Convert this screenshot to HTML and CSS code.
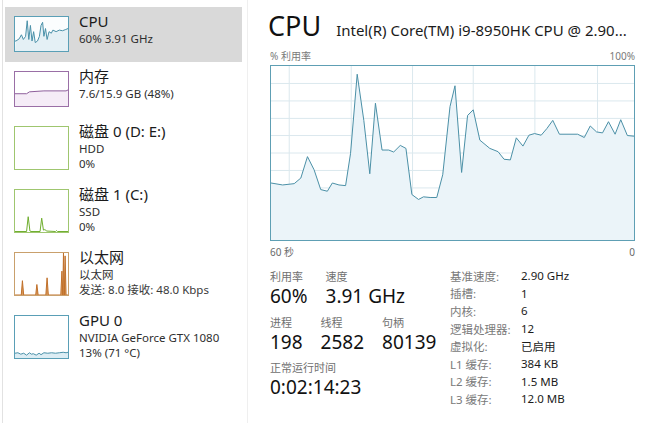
FILE: index.html
```html
<!DOCTYPE html>
<html lang="zh-CN">
<head>
<meta charset="utf-8">
<title>任务管理器 - CPU</title>
<link rel="stylesheet" href="styles.css">
</head>
<body>
<div class="app">
  <aside class="sidebar">
    <div class="item short selected">
      <svg class="thumb cpu" viewBox="42 48 165 109" preserveAspectRatio="none">
        <polygon class="area" points="42,157 45,125 55,118 62,105 68,120 75,110 80,60 85,120 90,75 95,125 100,95 105,130 112,125 118,110 123,75 128,65 132,110 137,85 142,120 148,95 155,100 160,90 170,95 180,90 190,92 200,88 207,85 207,157"/>
        <polyline class="line" points="42,125 45,125 55,118 62,105 68,120 75,110 80,60 85,120 90,75 95,125 100,95 105,130 112,125 118,110 123,75 128,65 132,110 137,85 142,120 148,95 155,100 160,90 170,95 180,90 190,92 200,88 207,85"/>
      </svg>
      <div class="info">
        <div class="title">CPU</div>
        <div class="sub">60% 3.91 GHz</div>
      </div>
    </div>
    <div class="item short">
      <svg class="thumb mem" viewBox="0 0 55 36" preserveAspectRatio="none">
        <polygon class="area" points="0,23 12,23 15,21 30,20 53,20 55,19 55,36 0,36"/>
        <polyline class="line" points="0,23 12,23 15,21 30,20 53,20 55,19"/>
      </svg>
      <div class="info">
        <div class="title">内存</div>
        <div class="sub">7.6/15.9 GB (48%)</div>
      </div>
    </div>
    <div class="item tall">
      <div class="thumb disk"></div>
      <div class="info">
        <div class="title">磁盘 0 (D: E:)</div>
        <div class="sub">HDD</div>
        <div class="sub">0%</div>
      </div>
    </div>
    <div class="item tall">
      <svg class="thumb disk" viewBox="0 0 55 44" preserveAspectRatio="none">
        <polyline class="line" points="0,43.5 12,43.5 13.7,28 15.5,43 16.5,43.5 26,43.5 27.7,29.5 29.5,42 31,41.5 33,43 42,43.5 43,42.5 44,43.5 55,43.5"/>
      </svg>
      <div class="info">
        <div class="title">磁盘 1 (C:)</div>
        <div class="sub">SSD</div>
        <div class="sub">0%</div>
      </div>
    </div>
    <div class="item tall">
      <svg class="thumb net" viewBox="0 0 55 44" preserveAspectRatio="none">
        <polygon class="area" points="0,44 6.5,44 7.7,29 9,44 21.5,44 22.7,33 24,44 32,44 33.3,26 34.6,44 47.5,44 48.7,19 49.6,44 50.3,0 51.2,44 52,3 53,44 55,44"/>
        <polyline class="line" points="0,44 6.5,44 7.7,29 9,44 21.5,44 22.7,33 24,44 32,44 33.3,26 34.6,44 47.5,44 48.7,19 49.6,44 50.3,0 51.2,44 52,3 53,44 55,44"/>
      </svg>
      <div class="info">
        <div class="title">以太网</div>
        <div class="sub">以太网</div>
        <div class="sub muted">发送: 8.0 接收: 48.0 Kbps</div>
      </div>
    </div>
    <div class="item tall">
      <svg class="thumb gpu" viewBox="0 0 55 44" preserveAspectRatio="none">
        <polygon class="area" points="0,39 3,38.5 6,40 9,39 12,41 15,38.5 17,40 19,39.5 22,41 25,39 27,40.5 30,38.5 34,39 38,38.5 42,39 46,38.5 50,38 53,38.5 55,38 55,44 0,44"/>
        <polyline class="line" points="0,39 3,38.5 6,40 9,39 12,41 15,38.5 17,40 19,39.5 22,41 25,39 27,40.5 30,38.5 34,39 38,38.5 42,39 46,38.5 50,38 53,38.5 55,38"/>
      </svg>
      <div class="info">
        <div class="title">GPU 0</div>
        <div class="sub">NVIDIA GeForce GTX 1080</div>
        <div class="sub">13% (71 °C)</div>
      </div>
    </div>
  </aside>

  <main class="detail">
    <div class="head">
      <h1 class="head-title">CPU</h1>
      <span class="model">Intel(R) Core(TM) i9-8950HK CPU @ 2.90...</span>
    </div>
    <div class="axis">
      <span>% 利用率</span>
      <span>100%</span>
    </div>
    <div class="graph">
      <svg viewBox="30 15 1095 528" preserveAspectRatio="none">
        <g class="grid">
          <line x1="85" y1="15" x2="85" y2="543"/>
          <line x1="272" y1="15" x2="272" y2="543"/>
          <line x1="457" y1="15" x2="457" y2="543"/>
          <line x1="640" y1="15" x2="640" y2="543"/>
          <line x1="826" y1="15" x2="826" y2="543"/>
          <line x1="1015" y1="15" x2="1015" y2="543"/>
          <line x1="30" y1="68" x2="1125" y2="68"/>
          <line x1="30" y1="121" x2="1125" y2="121"/>
          <line x1="30" y1="174" x2="1125" y2="174"/>
          <line x1="30" y1="226" x2="1125" y2="226"/>
          <line x1="30" y1="279" x2="1125" y2="279"/>
          <line x1="30" y1="332" x2="1125" y2="332"/>
          <line x1="30" y1="385" x2="1125" y2="385"/>
          <line x1="30" y1="437" x2="1125" y2="437"/>
          <line x1="30" y1="490" x2="1125" y2="490"/>
        </g>
        <polygon class="area" points="30,543 30,370 65,376 100,372 120,355 140,290 160,330 180,390 200,395 215,370 235,376 255,378 270,280 290,40 310,180 328,342 345,128 365,270 385,270 400,276 420,256 437,265 455,405 475,420 490,412 510,414 530,414 548,345 570,138 585,75 605,338 623,165 640,148 660,240 690,265 715,275 733,298 752,300 770,233 790,258 808,225 825,220 845,225 862,205 880,180 900,222 955,222 975,232 993,197 1012,215 1030,218 1048,184 1068,222 1085,178 1105,226 1125,228 1125,543"/>
        <polyline class="line" points="30,370 65,376 100,372 120,355 140,290 160,330 180,390 200,395 215,370 235,376 255,378 270,280 290,40 310,180 328,342 345,128 365,270 385,270 400,276 420,256 437,265 455,405 475,420 490,412 510,414 530,414 548,345 570,138 585,75 605,338 623,165 640,148 660,240 690,265 715,275 733,298 752,300 770,233 790,258 808,225 825,220 845,225 862,205 880,180 900,222 955,222 975,232 993,197 1012,215 1030,218 1048,184 1068,222 1085,178 1105,226 1125,228"/>
      </svg>
    </div>
    <div class="axis bottom">
      <span>60 秒</span>
      <span>0</span>
    </div>

    <div class="stats">
      <div class="live">
        <div class="row">
          <div class="stat"><div class="label">利用率</div><div class="value">60%</div></div>
          <div class="stat"><div class="label">速度</div><div class="value">3.91 GHz</div></div>
        </div>
        <div class="row">
          <div class="stat"><div class="label">进程</div><div class="value">198</div></div>
          <div class="stat"><div class="label">线程</div><div class="value">2582</div></div>
          <div class="stat"><div class="label">句柄</div><div class="value">80139</div></div>
        </div>
        <div class="row">
          <div class="stat"><div class="label">正常运行时间</div><div class="value">0:02:14:23</div></div>
        </div>
      </div>
      <dl class="props">
        <dt>基准速度:</dt><dd>2.90 GHz</dd>
        <dt>插槽:</dt><dd>1</dd>
        <dt>内核:</dt><dd>6</dd>
        <dt>逻辑处理器:</dt><dd>12</dd>
        <dt>虚拟化:</dt><dd>已启用</dd>
        <dt>L1 缓存:</dt><dd>384 KB</dd>
        <dt>L2 缓存:</dt><dd>1.5 MB</dd>
        <dt>L3 缓存:</dt><dd>12.0 MB</dd>
      </dl>
    </div>
  </main>
</div>
</body>
</html>
```

FILE: styles.css
```css
* { box-sizing: border-box; }

html, body {
  margin: 0;
  padding: 0;
}

body {
  width: 650px;
  height: 423px;
  overflow: hidden;
  background: #ffffff;
  color: #1a1a1a;
  font-family: "Noto Sans", "Noto Sans CJK SC", sans-serif;
}

.app {
  display: flex;
  height: 423px;
}

/* ---------- sidebar ---------- */
.sidebar {
  width: 246px;
  margin-left: 2px;
  flex: none;
  padding: 7px 5px 0 2px;
  border-left: 1px solid #e2e2e2;
  border-right: 1px solid #efefef;
}

.item {
  display: flex;
  align-items: flex-start;
  gap: 10px;
  padding: 9px 0 0 9px;
}

.item.short { height: 55px; }
.item.tall { height: 63px; }

.item.selected { background: #d9d9d9; }

.thumb {
  flex: none;
  display: block;
  width: 55px;
  height: 36px;
  border: 1px solid;
  background: #fff;
  overflow: hidden;
}

.item.tall .thumb { height: 44px; }

.thumb .line {
  fill: none;
  stroke-width: 1;
  vector-effect: non-scaling-stroke;
}

.thumb.cpu { border-color: #5a9fb6; background: #fbfdfe; }
.thumb.cpu .line { stroke: #4a91a9; }
.thumb.cpu .area { fill: #e4f0f5; }

.thumb.mem { border-color: #9a6fa6; }
.thumb.mem .line { stroke: #8e5f9c; }
.thumb.mem .area { fill: #f5ecf7; }

.thumb.disk { border-color: #9fc66f; }
.thumb.disk .line { stroke: #6fae2e; }

.thumb.net { border-color: #c9a06c; }
.thumb.net .line { stroke: #c0702a; }
.thumb.net .area { fill: #d89a5c; }

.thumb.gpu { border-color: #5a9fb6; }
.thumb.gpu .line { stroke: #4a91a9; }
.thumb.gpu .area { fill: #dcedf4; }

.info {
  margin-top: -5px;
  white-space: nowrap;
}

.title {
  font-size: 15px;
  line-height: 20px;
  color: #1b1b1b;
}

.sub {
  font-size: 11.5px;
  line-height: 15px;
  color: #2e2e2e;
}

.sub.muted { color: #3a3a3a; }

/* ---------- detail ---------- */
.detail {
  flex: 1;
  min-width: 0;
  padding: 12px 15px 0 20px;
}

.head {
  display: flex;
  align-items: baseline;
  gap: 15px;
  white-space: nowrap;
}

.head-title {
  margin: 0;
  font-size: 27px;
  line-height: 28px;
  font-weight: 400;
  color: #111;
}

.model {
  font-size: 15px;
  color: #1b1b1b;
}

.axis {
  display: flex;
  justify-content: space-between;
  margin: 9px 0 0 2px;
  font-size: 10px;
  line-height: 14px;
  color: #7a7a7a;
}

.axis.bottom {
  margin-top: 4px;
  color: #6a6a6a;
}

.graph {
  margin: 2px 0 0 2px;
  height: 176px;
  border: 1px solid #5e9fb4;
  background: #fff;
}

.graph svg {
  display: block;
  width: 100%;
  height: 100%;
}

.graph .grid line {
  stroke: #dbe8ee;
  stroke-width: 1;
  vector-effect: non-scaling-stroke;
}

.graph .area { fill: #ebf4f9; }

.graph .line {
  fill: none;
  stroke: #4b90a7;
  stroke-width: 1;
  vector-effect: non-scaling-stroke;
}

/* ---------- stats ---------- */
.stats {
  display: flex;
  margin: 12px 0 0 2px;
}

.live {
  width: 180px;
  flex: none;
  display: flex;
  flex-direction: column;
  gap: 7px;
}

.row {
  display: flex;
  gap: 18px;
}

.label {
  font-family: "Liberation Sans", "Noto Sans CJK SC", sans-serif;
  font-size: 11px;
  line-height: 12px;
  color: #707070;
  white-space: nowrap;
}

.value {
  font-size: 19px;
  line-height: 26.5px;
  color: #111;
  white-space: nowrap;
}

.props {
  margin: -4px 0 0 0;
  display: grid;
  grid-template-columns: 71px auto;
  grid-auto-rows: 17.6px;
  align-items: center;
  font-size: 11.5px;
}

.props dt {
  color: #7a7a7a;
  white-space: nowrap;
}

.props dd {
  margin: 0;
  color: #1b1b1b;
  white-space: nowrap;
}
```
